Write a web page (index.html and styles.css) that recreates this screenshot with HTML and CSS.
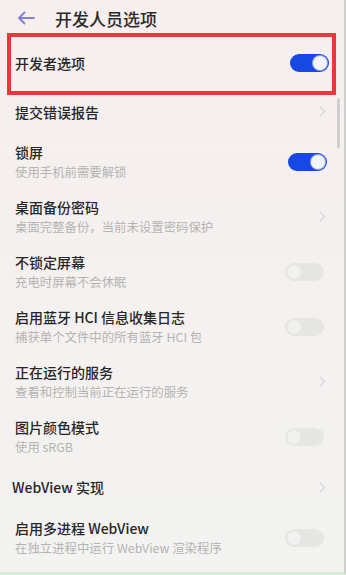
FILE: index.html
```html
<!DOCTYPE html>
<html lang="zh-CN">
<head>
    <meta charset="UTF-8">
    <meta name="viewport" content="width=device-width, initial-scale=1.0">
    <title>开发人员选项</title>
    <link rel="stylesheet" href="styles.css">
</head>
<body>
    <div class="pantalla">
        <div class="cabecera">
            <svg class="atras" width="20" height="14" viewBox="0 0 20 14">
                <path d="M18 7H3M8.5 1.5L3 7l5.5 5.5" fill="none" stroke="#7f80d8" stroke-width="1.8" stroke-linecap="round" stroke-linejoin="round"/>
            </svg>
            <span class="titulo">开发人员选项</span>
        </div>

        <div class="marcado">
            <div class="fila fila-marcada">
                <div class="textos"><div class="nombre">开发者选项</div></div>
                <span class="interruptor on"></span>
            </div>
        </div>

        <div class="fila simple">
            <div class="textos"><div class="nombre">提交错误报告</div></div>
            <svg class="flecha" width="7" height="11" viewBox="0 0 7 11"><path d="M1 1l4.5 4.5L1 10" fill="none" stroke="#d6d6d6" stroke-width="1.3"/></svg>
        </div>

        <div class="fila doble">
            <div class="textos">
                <div class="nombre">锁屏</div>
                <div class="detalle">使用手机前需要解锁</div>
            </div>
            <span class="interruptor on"></span>
        </div>

        <div class="fila doble">
            <div class="textos">
                <div class="nombre">桌面备份密码</div>
                <div class="detalle">桌面完整备份，当前未设置密码保护</div>
            </div>
            <svg class="flecha" width="7" height="11" viewBox="0 0 7 11"><path d="M1 1l4.5 4.5L1 10" fill="none" stroke="#d6d6d6" stroke-width="1.3"/></svg>
        </div>

        <div class="fila doble">
            <div class="textos">
                <div class="nombre">不锁定屏幕</div>
                <div class="detalle">充电时屏幕不会休眠</div>
            </div>
            <span class="interruptor"></span>
        </div>

        <div class="fila doble">
            <div class="textos">
                <div class="nombre">启用蓝牙 HCI 信息收集日志</div>
                <div class="detalle">捕获单个文件中的所有蓝牙 HCI 包</div>
            </div>
            <span class="interruptor"></span>
        </div>

        <div class="fila doble">
            <div class="textos">
                <div class="nombre">正在运行的服务</div>
                <div class="detalle">查看和控制当前正在运行的服务</div>
            </div>
            <svg class="flecha" width="7" height="11" viewBox="0 0 7 11"><path d="M1 1l4.5 4.5L1 10" fill="none" stroke="#d6d6d6" stroke-width="1.3"/></svg>
        </div>

        <div class="fila doble">
            <div class="textos">
                <div class="nombre">图片颜色模式</div>
                <div class="detalle">使用 sRGB</div>
            </div>
            <span class="interruptor"></span>
        </div>

        <div class="fila webview">
            <div class="textos"><div class="nombre">WebView 实现</div></div>
            <svg class="flecha" width="7" height="11" viewBox="0 0 7 11"><path d="M1 1l4.5 4.5L1 10" fill="none" stroke="#d6d6d6" stroke-width="1.3"/></svg>
        </div>

        <div class="fila doble">
            <div class="textos">
                <div class="nombre">启用多进程 WebView</div>
                <div class="detalle">在独立进程中运行 WebView 渲染程序</div>
            </div>
            <span class="interruptor"></span>
        </div>

        <div class="barra"></div>
    </div>
</body>
</html>
```

FILE: styles.css
```css
body {
    margin: 0;
    font-family: "Noto Sans CJK SC", "Noto Sans", sans-serif;
    background-color: #f4f2f0;
}
.pantalla {
    position: relative;
    width: 346px;
    height: 575px;
    overflow: hidden;
    background: linear-gradient(180deg, #f7eeee 0%, #f5f0ef 35%, #f3f3f1 100%);
    border-right: 2px solid #cfcfcd;
    border-bottom: 3px solid #d9ecd9;
    box-sizing: border-box;
}
.cabecera {
    height: 33px;
    display: flex;
    align-items: center;
    padding-left: 16px;
    padding-top: 3px;
    box-sizing: border-box;
}
.atras {
    margin-right: 19px;
}
.titulo {
    font-size: 17px;
    font-weight: 500;
    color: #2b2b2b;
}
.marcado {
    margin: 0 8px 0 7px;
    height: 62px;
    border: 4px solid #e8383b;
    box-sizing: border-box;
    display: flex;
}
.fila {
    display: flex;
    align-items: center;
    justify-content: space-between;
    padding: 0 17px 0 15px;
    box-sizing: border-box;
}
.fila-marcada {
    flex: 1;
    padding: 0 3px 2px 4px;
}
.simple {
    height: 39px;
    padding-bottom: 6px;
}
.doble {
    height: 55px;
}
.webview {
    height: 46px;
    padding-left: 12px;
}
.nombre {
    font-size: 14px;
    font-weight: 500;
    line-height: 18px;
    color: #272727;
}
.detalle {
    font-size: 12.4px;
    line-height: 16px;
    margin-top: 3px;
    color: #b4b4b2;
}
.flecha {
    margin-right: 1px;
}
.interruptor {
    position: relative;
    width: 39px;
    height: 18px;
    border-radius: 9px;
    background-color: #e6e6e4;
    flex-shrink: 0;
}
.interruptor::after {
    content: "";
    position: absolute;
    left: 2px;
    top: 2px;
    width: 14px;
    height: 14px;
    border-radius: 50%;
    background-color: #f1f1f0;
    box-shadow: 0 0 1px rgba(0, 0, 0, 0.08);
}
.interruptor.on {
    background-color: #1848e2;
}
.interruptor.on::after {
    left: auto;
    right: 2px;
    background-color: #f4f4fb;
    box-shadow: 0 0 0 1px #8fa6ee;
}
.doble .interruptor:not(.on) {
    margin-right: 3px;
}
.barra {
    position: absolute;
    right: 4px;
    top: 98px;
    width: 3px;
    height: 50px;
    border-radius: 2px;
    background-color: #cfcfcf;
}
```
